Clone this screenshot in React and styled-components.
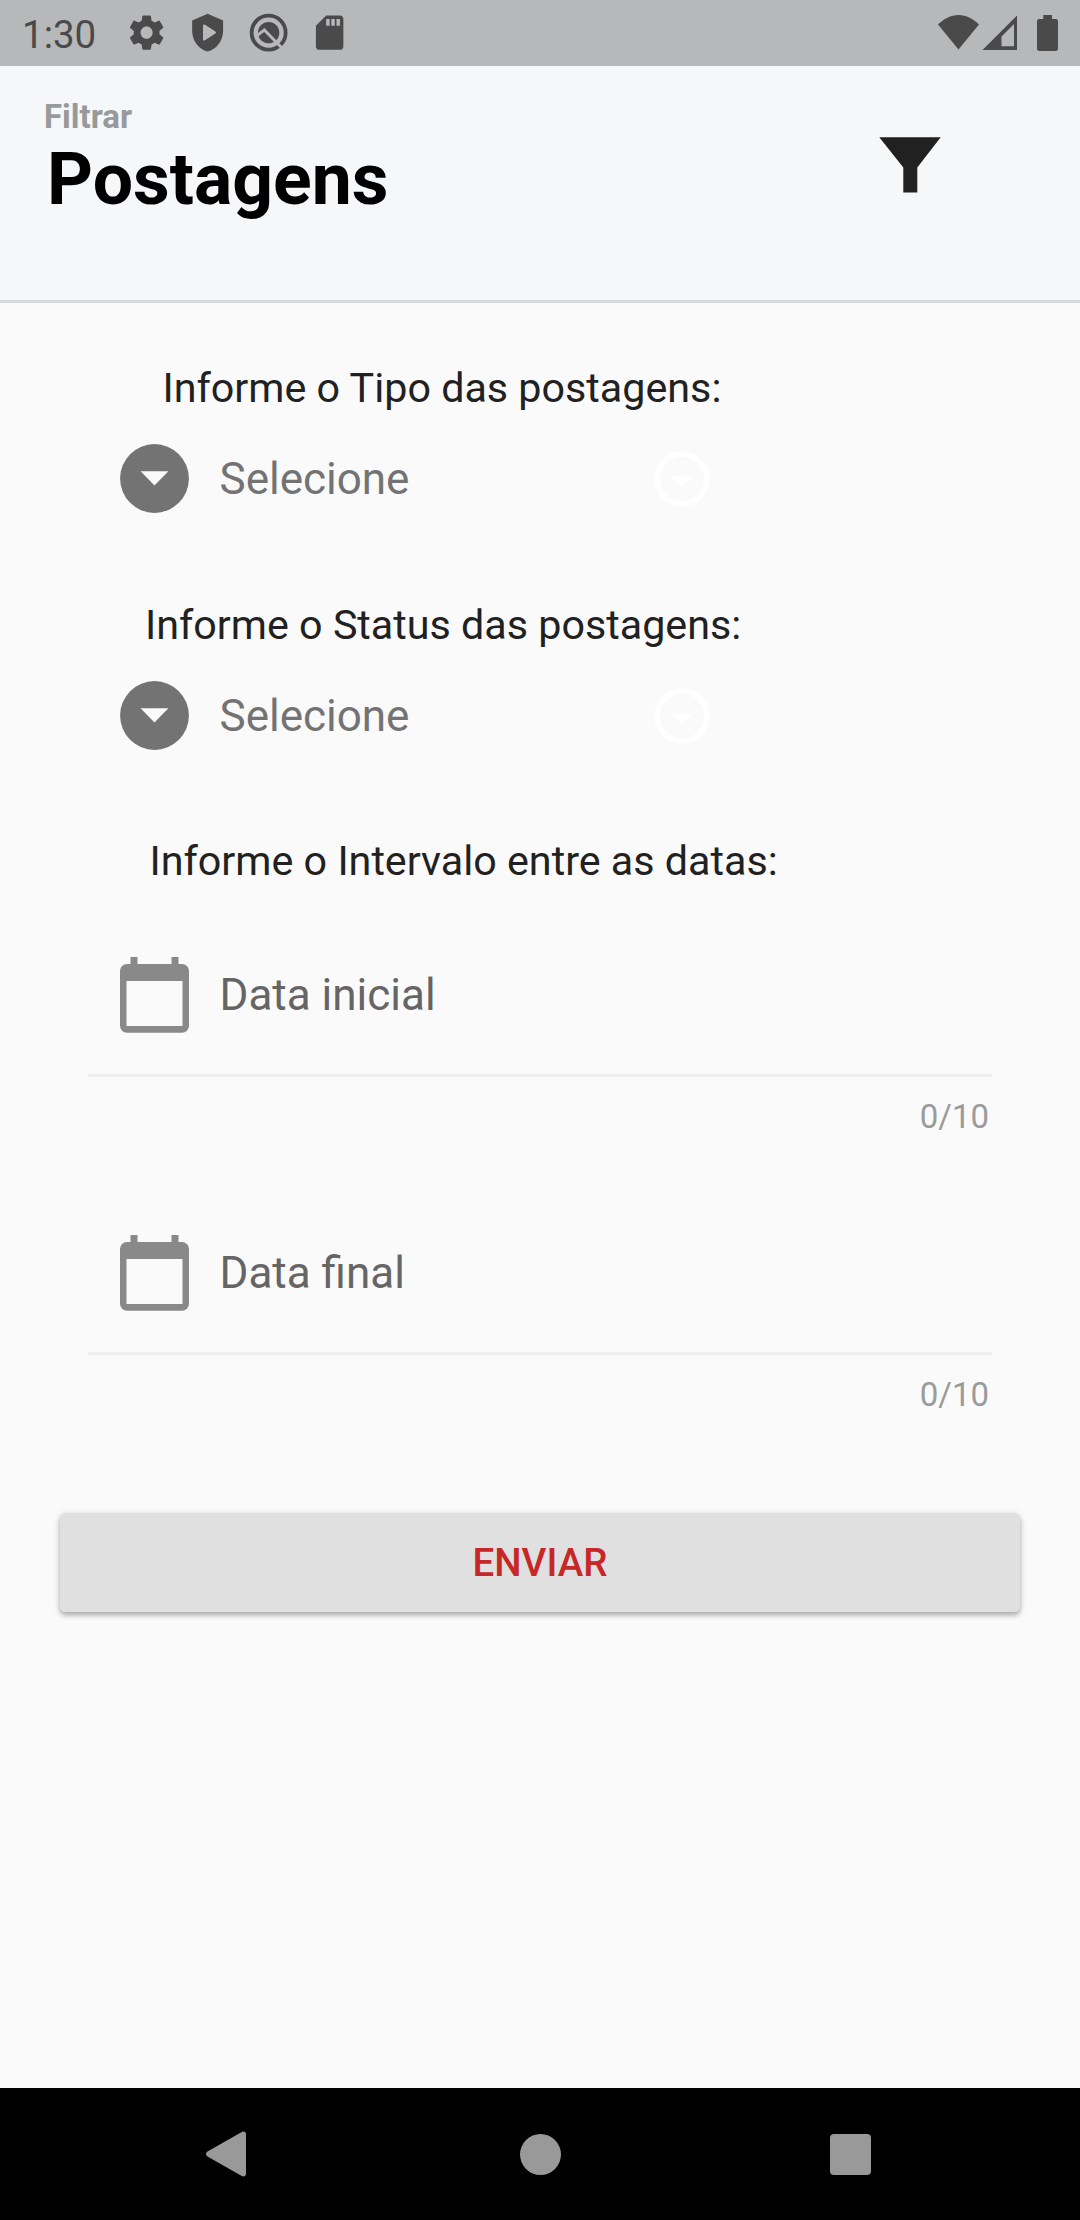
import styled, { createGlobalStyle } from "styled-components";

const App = () => {
  return (
    <Screen>
      <GlobalStyle />
      <StatusBar>
        <Clock>1:30</Clock>
        <Notifications>
          <SettingsIcon />
          <ProtectIcon />
          <SearchIcon />
          <CardIcon />
        </Notifications>
        <SystemIcons />
      </StatusBar>

      <Header>
        <Titles>
          <Subtitle>Filtrar</Subtitle>
          <Title>Postagens</Title>
        </Titles>
        <FilterIcon />
      </Header>

      <Form>
        <Select label="Informe o Tipo das postagens:" indent={162.5} space={88} />
        <Select label="Informe o Status das postagens:" indent={145} space={87} />
        <Label $indent={149.5} $space={72}>Informe o Intervalo entre as datas:</Label>
        <DateInput placeholder="Data inicial" />
        <DateInput placeholder="Data final" />
        <SendButton>ENVIAR</SendButton>
      </Form>

      <NavBar>
        <svg width="40" height="46" viewBox="0 0 40 46" fill="#999">
          <path d="M1.5 20.5 35.8 1C37.8 0 40 1 40 3.2V42.8C40 45 37.8 46 35.8 45L1.5 25.5C-.5 24.2-.5 21.8 1.5 20.5Z" />
        </svg>
        <HomeKey />
        <RecentKey />
      </NavBar>
    </Screen>
  );
};
export default App;

const Select = ({ label, indent, space }) => {
  return (
    <>
      <Label $indent={indent} $space={32}>{label}</Label>
      <SelectRow $space={space}>
        <svg width="69" height="69" viewBox="0 0 69 69">
          <circle cx="34.5" cy="34.5" r="34.4" fill="#737373" />
          <path d="M20.6 27.3h27.8L34.5 41.6z" fill="#fafafa" />
        </svg>
        <Hint $color="#737373">Selecione</Hint>
        <svg width="56" height="56" viewBox="0 0 56 56">
          <circle cx="28" cy="28" r="24.9" fill="none" stroke="#fff" strokeWidth="5.4" />
          <path d="M17 25.2h22L28 36.3z" fill="#fff" />
        </svg>
      </SelectRow>
    </>
  );
};

const DateInput = ({ placeholder }) => {
  return (
    <Field>
      <FieldRow>
        <svg width="69" height="76" viewBox="0 0 69 76" fill="#898989">
          <path d="M10.5 0h7v7h34V0h7v7H62a7 7 0 0 1 7 7v54.700a7 7 0 0 1-7 7H7a7 7 0 0 1-7-7V14a7 7 0 0 1 7-7h3.500zM6.500 24v45h56V24z" fillRule="evenodd" />
        </svg>
        <Hint $color="#656565">{placeholder}</Hint>
      </FieldRow>
      <Counter>0/10</Counter>
    </Field>
  );
};

const SettingsIcon = () => (
  <svg width="41.25" height="41.25" viewBox="0 0 24 24" fill="#4a4a4a">
    <path d="M19.430 12.980c.04-.32.07-.64.07-.98s-.03-.66-.07-.98l2.110-1.650c.19-.15.24-.42.12-.64l-2-3.460c-.12-.22-.39-.3-.61-.22l-2.490 1c-.52-.4-1.080-.73-1.690-.98l-.38-2.650C14.460 2.180 14.250 2 14 2h-4c-.25 0-.46.18-.49.42l-.38 2.650c-.61.25-1.170.59-1.690.98l-2.490-1c-.23-.09-.49 0-.61.22l-2 3.460c-.13.22-.07.49.12.64l2.110 1.650c-.04.32-.07.65-.07.98s.03.66.07.98l-2.110 1.650c-.19.15-.24.42-.12.64l2 3.460c.12.22.39.3.61.22l2.490-1c.52.4 1.080.73 1.690.98l.38 2.650c.03.24.24.42.49.42h4c.25 0 .46-.18.49-.42l.38-2.650c.61-.25 1.170-.59 1.690-.98l2.490 1c.23.09.49 0 .61-.22l2-3.460c.12-.22.07-.49-.12-.64zM12 15.500c-1.930 0-3.500-1.570-3.500-3.500s1.570-3.500 3.500-3.500 3.500 1.570 3.500 3.500-1.570 3.500-3.500 3.500z" />
  </svg>
);

const ProtectIcon = () => (
  <svg width="41.25" height="41.25" viewBox="0 0 24 24" fill="#4a4a4a">
    <path d="M12 1 3 5v6c0 5.550 3.840 10.740 9 12 5.160-1.260 9-6.450 9-12V5zM9.300 8.100c0-.8.600-1.100 1.200-.7l6 3.900c.5.400.5.900 0 1.200l-6 3.900c-.6.400-1.200.1-1.200-.6z" fillRule="evenodd" />
  </svg>
);

const SearchIcon = () => (
  <svg width="41.25" height="41.25" viewBox="0 0 24 24" fill="none">
    <circle cx="12" cy="12" r="9.900" stroke="#4a4a4a" strokeWidth="2.200" />
    <circle cx="12" cy="12" r="6.200" fill="#4a4a4a" />
    <path d="M5.300 13.800 9.500 10.400 20.600 21.800" stroke="#b7b8ba" strokeWidth="1.700" />
  </svg>
);

const CardIcon = () => (
  <svg width="41.25" height="41.25" viewBox="0 0 24 24" fill="#4a4a4a">
    <path d="M18 2h-8L4.020 8 4 20c0 1.100.9 2 2 2h12c1.100 0 2-.9 2-2V4c0-1.100-.9-2-2-2zm-6 6h-2V4h2v4zm3 0h-2V4h2v4zm3 0h-2V4h2v4z" />
  </svg>
);

// wifi, mobile signal and battery share one strip
const SystemIcons = () => (
  <svg width="120" height="36" viewBox="0 0 120 36" fill="#4a4a4a">
    <path d="M0 9.500C5.500 4 12.800 0 20.500 0S35.500 4 41 9.500L20.500 34.500z" />
    <path d="M79 .5V35H44.500zM76 9 63.500 21.500V31.300H76z" fillRule="evenodd" />
    <path d="M105.300 0h8.700v4h3.700a2.300 2.300 0 0 1 2.300 2.300v27.400a2.300 2.300 0 0 1-2.300 2.300h-16.400a2.300 2.300 0 0 1-2.300-2.300V6.300a2.300 2.300 0 0 1 2.300-2.300h4z" />
  </svg>
);

const FilterIcon = () => (
  <svg width="62" height="56" viewBox="0 0 62 56" fill="#212121">
    <path d="M.3.300h61.400L38.300 30.500v24.900h-14V30.500z" />
  </svg>
);

const GlobalStyle = createGlobalStyle`
  body {
    margin: 0;
    background: #fafafa;
    font-family: Roboto, "Liberation Sans", sans-serif;
  }
  svg {
    display: block;
    flex: none;
  }
`;

const Screen = styled.div`
  display: flex;
  flex-direction: column;
  width: 1080px;
  height: 2220px;
`;

const StatusBar = styled.div`
  display: flex;
  align-items: center;
  box-sizing: border-box;
  height: 66px;
  padding: 0 22px;
  background: #b7b8ba;
`;

const Clock = styled.span`
  width: 104px;
  padding-top: 3px;
  font-size: 38.5px;
  line-height: 44px;
  color: #4a4a4a;
`;

const Notifications = styled.div`
  display: flex;
  flex: 1;
  gap: 19.75px;
`;

const Header = styled.header`
  display: flex;
  justify-content: space-between;
  box-sizing: border-box;
  height: 237px;
  padding: 31px 139px 0 44px;
  background: #f6f7f9;
  border-bottom: 3px solid #d9dadb;

  svg {
    margin-top: 40px;
  }
`;

const Titles = styled.div`
  display: flex;
  flex-direction: column;
`;

const Subtitle = styled.span`
  font-size: 33px;
  font-weight: 700;
  line-height: 40px;
  color: #98999a;
`;

const Title = styled.h1`
  margin: 1px 0 0 3px;
  font-size: 71.5px;
  font-weight: 700;
  line-height: 84px;
  color: #000;
`;

const Form = styled.main`
  display: flex;
  flex: 1;
  flex-direction: column;
  padding: 61px 60px 0;
`;

const Label = styled.span`
  margin-left: ${({ $indent }) => $indent - 60}px;
  margin-bottom: ${({ $space }) => $space}px;
  font-size: 41.25px;
  line-height: 48px;
  white-space: nowrap;
  color: #212121;
`;

const SelectRow = styled.div`
  display: flex;
  align-items: center;
  height: 69px;
  margin: 0 0 ${({ $space }) => $space}px 59.5px;
`;

const Hint = styled.span`
  width: 434px;
  margin-left: 31px;
  font-size: 44px;
  line-height: 52px;
  color: ${({ $color }) => $color};
`;

const Field = styled.div`
  margin: 0 28px 98px;
`;

const FieldRow = styled.div`
  display: flex;
  align-items: flex-start;
  height: 117px;
  padding-left: 31.5px;
  border-bottom: 3px solid #eee;

  span {
    margin-top: 12px;
  }
`;

const Counter = styled.div`
  margin-top: 20px;
  padding-right: 3px;
  font-size: 33px;
  line-height: 40px;
  text-align: right;
  color: #9b9b9b;
`;

const SendButton = styled.button`
  height: 99px;
  padding: 0;
  font-family: inherit;
  font-size: 38.5px;
  font-weight: 500;
  color: #c62828;
  background: #e0e0e0;
  border: none;
  border-radius: 5.5px;
  box-shadow: 0 3px 5px rgba(0, 0, 0, 0.26), 0 2px 8px rgba(0, 0, 0, 0.12);
`;

const NavBar = styled.nav`
  display: flex;
  align-items: center;
  justify-content: space-between;
  box-sizing: border-box;
  height: 132px;
  padding: 0 209px 0 206px;
  background: #000;
`;

const HomeKey = styled.div`
  width: 41px;
  height: 41px;
  margin-left: 4px;
  border-radius: 50%;
  background: #999;
`;

const RecentKey = styled.div`
  width: 41px;
  height: 41px;
  border-radius: 4px;
  background: #999;
`;
